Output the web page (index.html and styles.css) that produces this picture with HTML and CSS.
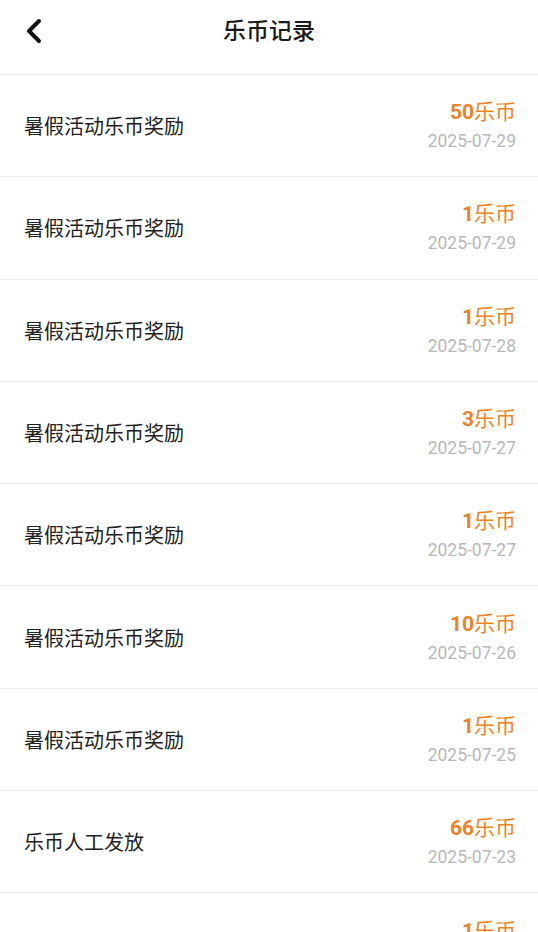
FILE: index.html
```html
<!DOCTYPE html>
<html lang="zh-CN">
<head>
  <meta charset="UTF-8">
  <title>乐币记录</title>
  <link rel="stylesheet" href="styles.css">
</head>
<body>

  <div class="topbar">
    <span class="back">
      <svg width="18" height="26" viewBox="0 0 18 26"><path d="M14 3 L4 13 L14 23" fill="none" stroke="#111" stroke-width="4" stroke-linecap="round" stroke-linejoin="round"/></svg>
    </span>
    <h1>乐币记录</h1>
  </div>

  <ul class="list">
    <li class="item">
      <span class="name">暑假活动乐币奖励</span>
      <div class="right">
        <div class="amount"><b>50</b>乐币</div>
        <div class="date">2025-07-29</div>
      </div>
    </li>
    <li class="item">
      <span class="name">暑假活动乐币奖励</span>
      <div class="right">
        <div class="amount"><b>1</b>乐币</div>
        <div class="date">2025-07-29</div>
      </div>
    </li>
    <li class="item">
      <span class="name">暑假活动乐币奖励</span>
      <div class="right">
        <div class="amount"><b>1</b>乐币</div>
        <div class="date">2025-07-28</div>
      </div>
    </li>
    <li class="item">
      <span class="name">暑假活动乐币奖励</span>
      <div class="right">
        <div class="amount"><b>3</b>乐币</div>
        <div class="date">2025-07-27</div>
      </div>
    </li>
    <li class="item">
      <span class="name">暑假活动乐币奖励</span>
      <div class="right">
        <div class="amount"><b>1</b>乐币</div>
        <div class="date">2025-07-27</div>
      </div>
    </li>
    <li class="item">
      <span class="name">暑假活动乐币奖励</span>
      <div class="right">
        <div class="amount"><b>10</b>乐币</div>
        <div class="date">2025-07-26</div>
      </div>
    </li>
    <li class="item">
      <span class="name">暑假活动乐币奖励</span>
      <div class="right">
        <div class="amount"><b>1</b>乐币</div>
        <div class="date">2025-07-25</div>
      </div>
    </li>
    <li class="item">
      <span class="name">乐币人工发放</span>
      <div class="right">
        <div class="amount"><b>66</b>乐币</div>
        <div class="date">2025-07-23</div>
      </div>
    </li>
    <li class="item">
      <span class="name">暑假活动乐币奖励</span>
      <div class="right">
        <div class="amount"><b>1</b>乐币</div>
        <div class="date">2025-07-22</div>
      </div>
    </li>
  </ul>

</body>
</html>
```

FILE: styles.css
```css
body {
  margin: 0;
  font-family: Roboto, "Noto Sans CJK SC", sans-serif;
  background-color: #fff;
  color: #222;
}
.topbar {
  height: 74px;
  border-bottom: 1px solid #ebebeb;
  display: flex;
  align-items: center;
  justify-content: center;
  position: relative;
}
.topbar h1 {
  margin: 0 0 16px;
  font-size: 23px;
  font-weight: 500;
  color: #1a1a1a;
}
.back {
  position: absolute;
  left: 25px;
  top: 18px;
}
.list {
  list-style: none;
  margin: 0;
  padding: 0;
}
.item {
  box-sizing: border-box;
  height: 102.3px;
  border-bottom: 1px solid #ebebeb;
  padding: 0 22px 0 24px;
  display: flex;
  align-items: center;
  justify-content: space-between;
}
.name {
  font-size: 20px;
  color: #222;
}
.right {
  text-align: right;
  padding-top: 3px;
}
.amount {
  font-size: 21px;
  color: #ec8224;
  line-height: 29px;
}
.amount b {
  font-weight: 700;
}
.date {
  font-size: 17.5px;
  color: #b8b8b8;
  line-height: 29px;
}
```
